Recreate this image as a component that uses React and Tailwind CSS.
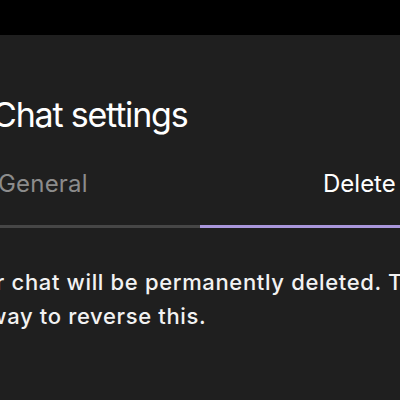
import React, { useState } from 'react';

const tabs = ['General', 'Delete'];

const App = () => {
  const [activo, setActivo] = useState(1);

  return (
    <div className="w-[400px] h-[400px] overflow-hidden bg-black" style={{ fontFamily: 'Inter, "Noto Sans", sans-serif' }}>
      <div className="h-[35px] bg-black" />
      <div className="h-[365px] bg-[#1f1f1f] text-white">
        <div className="ml-[-8px] pt-[59px]">
          <h1 className="text-[34px] leading-[41px] font-normal tracking-[-1.2px] whitespace-nowrap">Chat settings</h1>
        </div>

        <div className="mt-[34px] flex w-[620px]">
          {tabs.map((tab, i) => (
            <button
              key={tab}
              onClick={() => setActivo(i)}
              className={i === 0 ? 'w-[200px] text-left' : 'w-[420px] text-left'}
            >
              <span
                className={
                  'block text-[24px] leading-[29px] pb-[27px] whitespace-nowrap ' +
                  (i === 0 ? 'ml-[-2px] tracking-[0.2px] ' : 'pl-[123px] ') +
                  (activo === i ? 'text-white' : 'text-[#8c8c8c]')
                }
              >
                {tab}
              </span>
              <span className={'block h-[3px] ' + (activo === i ? 'bg-[#a996db]' : 'bg-[#464646]')} />
            </button>
          ))}
        </div>

        <p className="mt-[37px] ml-[-46px] w-[550px] text-[22px] leading-[34px] font-medium tracking-[0.65px] text-[#f2f2f2]">
          Your chat will be permanently deleted. There is no way to reverse this.
        </p>
      </div>
    </div>
  );
};

export default App;
